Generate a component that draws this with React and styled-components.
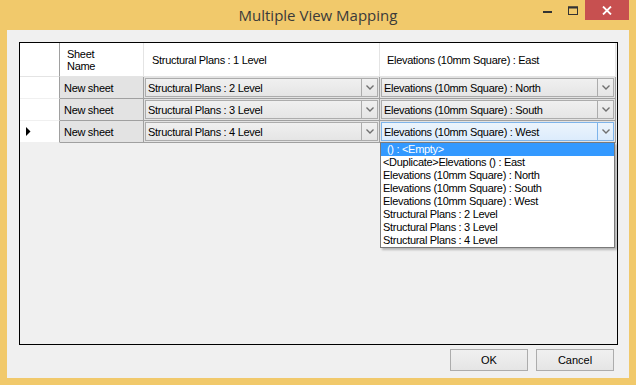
import React from 'react';
import styled, { createGlobalStyle } from 'styled-components';

const GlobalStyle = createGlobalStyle`
  html, body {
    margin: 0;
    padding: 0;
    background: #f1c96b;
  }
  body {
    font-family: 'Liberation Sans', Arial, sans-serif;
  }
`;

const Window = styled.div`
  width: 636px;
  height: 385px;
  background: #f1c96b;
  display: flex;
  flex-direction: column;
  box-sizing: border-box;
`;

const TitleBar = styled.div`
  height: 30px;
  display: grid;
  grid-template-columns: 1fr auto 1fr;
  align-items: start;
`;

const Title = styled.div`
  grid-column: 2;
  font-family: 'Open Sans', 'Noto Sans', sans-serif;
  font-size: 15px;
  color: #3a3a3a;
  line-height: 30px;
`;

const Controls = styled.div`
  grid-column: 3;
  justify-self: end;
  display: flex;
  align-items: flex-start;
  margin-right: 7px;
`;

const CtrlButton = styled.div`
  height: 20px;
  width: ${props => props.wide ? '44px' : '25px'};
  display: flex;
  align-items: center;
  justify-content: center;
  background: ${props => props.danger ? '#c75050' : 'transparent'};
`;

const Client = styled.div`
  flex: 1;
  margin: 0 7px 7px 7px;
  background: #f0f0f0;
  display: flex;
  flex-direction: column;
  padding: 12px 11px 0 12px;
`;

const GridBox = styled.div`
  position: relative;
  height: 303px;
  border: 1px solid #000;
  box-sizing: border-box;
  background: #f0f0f0;
`;

const Table = styled.div`
  display: grid;
  grid-template-columns: 40px 84px 236px 236px;
  grid-template-rows: 34px 22px 22px 22px;
  font-size: 11px;
  letter-spacing: -0.3px;
  color: #000;
`;

const HeaderCell = styled.div`
  background: #fff;
  display: flex;
  align-items: center;
  padding-left: ${props => props.pad || '6px'};
  border-right: 1px solid ${props => props.line || '#e4e4e4'};
  border-bottom: 1px solid #e4e4e4;
  line-height: 12px;
  box-sizing: border-box;
`;

const RowHeader = styled.div`
  background: #fff;
  border-right: 1px solid #a0a0a0;
  border-bottom: 1px solid #f0f0f0;
  display: flex;
  align-items: center;
  padding-left: 6px;
  box-sizing: border-box;
`;

const TextCell = styled.div`
  background: #e3e3e3;
  border-right: 1px solid #a0a0a0;
  border-bottom: 1px solid #a0a0a0;
  display: flex;
  align-items: center;
  padding-left: 4px;
  box-sizing: border-box;
`;

const ComboCell = styled.div`
  border-right: 1px solid #a0a0a0;
  border-bottom: 1px solid #a0a0a0;
  background: #e3e3e3;
  padding: 1px;
  box-sizing: border-box;
  display: flex;
  position: relative;
`;

const Combo = styled.div`
  flex: 1;
  display: flex;
  border: 1px solid ${props => props.active ? '#7eb4ea' : '#acacac'};
  background: ${props => props.active
    ? 'linear-gradient(#ecf4fc, #dcecfc)'
    : 'linear-gradient(#f0f0f0, #e5e5e5)'};
`;

const ComboText = styled.div`
  flex: 1;
  display: flex;
  align-items: center;
  padding-left: 2px;
  white-space: nowrap;
  overflow: hidden;
`;

const ComboArrow = styled.div`
  width: 15px;
  border-left: 1px solid ${props => props.active ? '#7eb4ea' : '#acacac'};
  display: flex;
  align-items: center;
  justify-content: center;
`;

const DropList = styled.div`
  position: absolute;
  top: 100%;
  left: 0;
  width: 235px;
  background: #fff;
  border: 1px solid #7a7a7a;
  box-sizing: border-box;
  box-shadow: 2px 2px 2px rgba(0, 0, 0, 0.25);
  z-index: 2;
`;

const DropItem = styled.div`
  height: 13px;
  line-height: 13px;
  padding-left: ${props => props.selected ? '6px' : '2px'};
  background: ${props => props.selected ? '#3399ff' : 'transparent'};
  color: ${props => props.selected ? '#fff' : '#000'};
  white-space: nowrap;
`;

const Footer = styled.div`
  display: flex;
  justify-content: flex-end;
  gap: 8px;
  padding: 4px 4px 0 0;
`;

const Button = styled.button`
  width: 78px;
  height: 22px;
  border: 1px solid #acacac;
  background: linear-gradient(#f0f0f0, #e5e5e5);
  font-family: 'Liberation Sans', Arial, sans-serif;
  font-size: 11px;
  color: #000;
  padding: 0;
`;

function Chevron() {
  return (
    <svg width="8" height="5" viewBox="0 0 8 5">
      <path d="M0.5 0.5 L4 4 L7.5 0.5" fill="none" stroke="#707070" strokeWidth="1.4" />
    </svg>
  );
}

function ComboBox({ value, active, children }) {
  return (
    <ComboCell>
      <Combo active={active}>
        <ComboText>{value}</ComboText>
        <ComboArrow active={active}><Chevron /></ComboArrow>
      </Combo>
      {children}
    </ComboCell>
  );
}

const rows = [
  { plan: 'Structural Plans : 2 Level', elev: 'Elevations (10mm Square) : North' },
  { plan: 'Structural Plans : 3 Level', elev: 'Elevations (10mm Square) : South' },
  { plan: 'Structural Plans : 4 Level', elev: 'Elevations (10mm Square) : West', current: true },
];

const options = [
  '() : <Empty>',
  '<Duplicate>Elevations () : East',
  'Elevations (10mm Square) : North',
  'Elevations (10mm Square) : South',
  'Elevations (10mm Square) : West',
  'Structural Plans : 2 Level',
  'Structural Plans : 3 Level',
  'Structural Plans : 4 Level',
];

export default function App() {
  return (
    <>
      <GlobalStyle />
      <Window>
        <TitleBar>
          <Title>Multiple View Mapping</Title>
          <Controls>
            <CtrlButton>
              <svg width="9" height="8" viewBox="0 0 9 8">
                <rect x="0" y="5" width="9" height="2" fill="#333" />
              </svg>
            </CtrlButton>
            <CtrlButton>
              <svg width="10" height="9" viewBox="0 0 10 9">
                <rect x="0.5" y="1" width="9" height="7.5" fill="none" stroke="#333" strokeWidth="1" />
                <rect x="0" y="0.5" width="10" height="2" fill="#333" />
              </svg>
            </CtrlButton>
            <CtrlButton wide danger>
              <svg width="10" height="9" viewBox="0 0 10 9">
                <path d="M1 0.5 L9 8.5 M9 0.5 L1 8.5" stroke="#fff" strokeWidth="1.8" />
              </svg>
            </CtrlButton>
          </Controls>
        </TitleBar>
        <Client>
          <GridBox>
            <Table>
              <HeaderCell line="#a0a0a0" />
              <HeaderCell pad="7px">Sheet<br />Name</HeaderCell>
              <HeaderCell pad="8px">Structural Plans : 1 Level</HeaderCell>
              <HeaderCell pad="7px">Elevations (10mm Square) : East</HeaderCell>
              {rows.map((r, i) => (
                <React.Fragment key={i}>
                  <RowHeader>
                    {r.current && (
                      <svg width="5" height="9" viewBox="0 0 5 9">
                        <polygon points="0,0 4.5,4.5 0,9" fill="#000" />
                      </svg>
                    )}
                  </RowHeader>
                  <TextCell>New sheet</TextCell>
                  <ComboBox value={r.plan} />
                  <ComboBox value={r.elev} active={r.current}>
                    {r.current && (
                      <DropList>
                        {options.map((o, j) => (
                          <DropItem key={j} selected={j === 0}>{o}</DropItem>
                        ))}
                      </DropList>
                    )}
                  </ComboBox>
                </React.Fragment>
              ))}
            </Table>
          </GridBox>
          <Footer>
            <Button>OK</Button>
            <Button>Cancel</Button>
          </Footer>
        </Client>
      </Window>
    </>
  );
}
